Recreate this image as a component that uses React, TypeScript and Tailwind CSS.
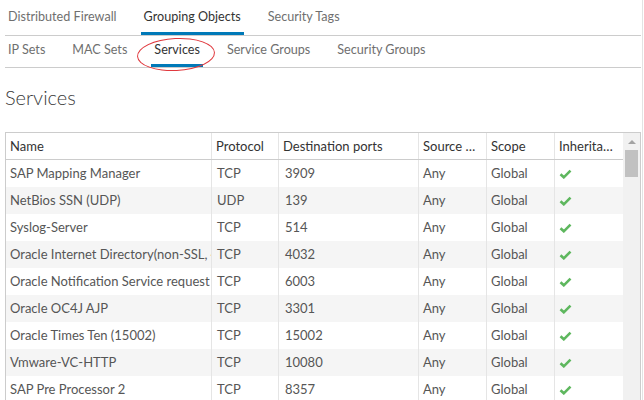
import React from "react";

type Service = {
  name: string;
  protocol: string;
  ports: string;
};

const services: Service[] = [
  { name: "SAP Mapping Manager", protocol: "TCP", ports: "3909" },
  { name: "NetBios SSN (UDP)", protocol: "UDP", ports: "139" },
  { name: "Syslog-Server", protocol: "TCP", ports: "514" },
  { name: "Oracle Internet Directory(non-SSL, 4032)", protocol: "TCP", ports: "4032" },
  { name: "Oracle Notification Service request port", protocol: "TCP", ports: "6003" },
  { name: "Oracle OC4J AJP", protocol: "TCP", ports: "3301" },
  { name: "Oracle Times Ten (15002)", protocol: "TCP", ports: "15002" },
  { name: "Vmware-VC-HTTP", protocol: "TCP", ports: "10080" },
  { name: "SAP Pre Processor 2", protocol: "TCP", ports: "8357" },
];

const topTabs = ["Distributed Firewall", "Grouping Objects", "Security Tags"];
const subTabs = ["IP Sets", "MAC Sets", "Services", "Service Groups", "Security Groups"];

// column widths include the right divider
const cols = [
  { label: "Name", w: "w-[206px]" },
  { label: "Protocol", w: "w-[67px]" },
  { label: "Destination ports", w: "w-[140px]" },
  { label: "Source ports", w: "w-[68px]" },
  { label: "Scope", w: "w-[68px]" },
  { label: "Inheritance", w: "w-[68px]" },
];

const Check = () => (
  <svg width="13" height="10" viewBox="0 0 13 10" className="block">
    <path d="M1.5 5.2 L4.8 8.3 L11.5 1.6" fill="none" stroke="#5eb75e" strokeWidth="2.6" />
  </svg>
);

const Tabs = ({ items, active, h }: { items: string[]; active: string; h: string }) => (
  <nav className={`flex gap-[21px] border-b border-[#cccccc] text-[12.6px] ${h}`}>
    {items.map((t) => (
      <div
        key={t}
        className={`flex items-center px-[3px] border-b-[3px] whitespace-nowrap ${
          t === active ? "border-[#0079b8] text-[#333333]" : "border-transparent text-[#6f6f6f]"
        }`}
      >
        {t}
      </div>
    ))}
  </nav>
);

const cell = "h-[27px] leading-[27px] overflow-hidden whitespace-nowrap";

const App = () => {
  return (
    <div className="relative w-[644px] h-[400px] overflow-hidden bg-white font-['Lato',sans-serif] text-[13px]">
      <div className="w-[643px] h-full border-r border-[#e3e3e3] pl-[5px] pr-[1px]">
        <Tabs items={topTabs} active="Grouping Objects" h="h-[36px] pt-[2px]" />
        <Tabs items={subTabs} active="Services" h="h-[32px]" />

        <h1 className="mt-[17px] h-[24px] leading-[24px] text-[20px] font-light text-[#3a3a3a]">Services</h1>

        {/* table */}
        <div className="mt-[23px] flex border border-[#cccccc] h-[300px]">
          <div className="w-[617px]">
            <div className="flex h-[27px] border-b border-[#cccccc] text-[#333333]">
              {cols.map((c, i) => (
                <div
                  key={c.label}
                  className={`${c.w} h-[26px] leading-[26px] pl-[4px] pr-[6px] ${i < 5 ? "border-r border-[#e5e5e5]" : ""}`}
                >
                  <span className="block overflow-hidden text-ellipsis whitespace-nowrap">{c.label}</span>
                </div>
              ))}
            </div>
            {services.map((s, r) => (
              <div
                key={s.name}
                className={`flex h-[27px] text-[#565656] ${r % 2 === 1 ? "bg-[#f5f5f5]" : "bg-white"}`}
              >
                <div className={`w-[206px] ${cell} pl-[4px] border-r border-[#e5e5e5]`}>{s.name}</div>
                <div className={`w-[67px] ${cell} pl-[5px] border-r border-[#e5e5e5]`}>{s.protocol}</div>
                <div className={`w-[140px] ${cell} pl-[6px] border-r border-[#e5e5e5]`}>{s.ports}</div>
                <div className={`w-[68px] ${cell} pl-[4px] border-r border-[#e5e5e5]`}>Any</div>
                <div className={`w-[68px] ${cell} pl-[4px] border-r border-[#e5e5e5]`}>Global</div>
                <div className="w-[68px] h-[27px] flex items-center pl-[4px]">
                  <Check />
                </div>
              </div>
            ))}
          </div>

          {/* scrollbar */}
          <div className="w-[18px] bg-[#f1f1f1] flex flex-col items-center">
            <div className="h-[17px] flex items-center justify-center">
              <div className="w-0 h-0 border-x-[4px] border-x-transparent border-b-[4px] border-b-[#a3a3a3]" />
            </div>
            <div className="w-[13px] h-[27px] bg-[#c1c1c1]" />
          </div>
        </div>
      </div>

      {/* hand-drawn highlight around the Services tab */}
      <div className="absolute left-[137px] top-[38px] w-[78px] h-[33px] rounded-[50%] border-[1.5px] border-[#e0393e] -rotate-3" />
    </div>
  );
};

export default App;
